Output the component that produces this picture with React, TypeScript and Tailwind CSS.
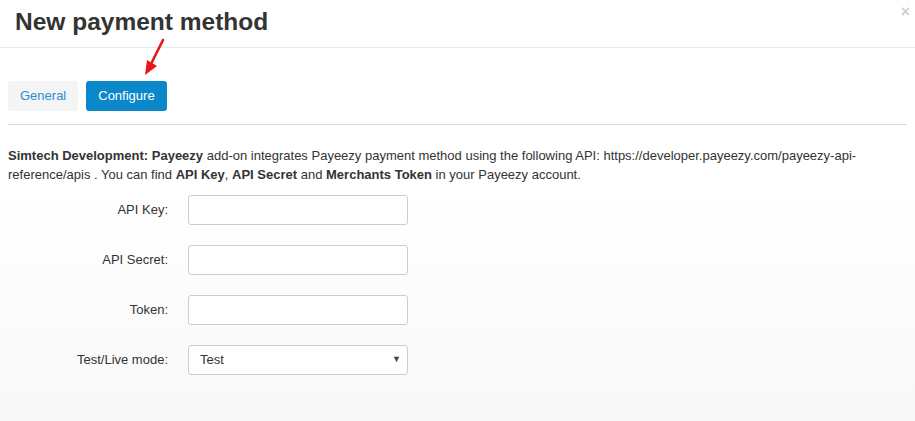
import React from "react";

export default function App() {
  const rows = [
    { label: "API Key:" },
    { label: "API Secret:" },
    { label: "Token:" },
  ];
  return (
    <div
      className="relative w-[915px] h-[421px] overflow-hidden bg-gradient-to-b from-white from-45% to-[#f8f8f8] text-[#333] text-[13px]"
      style={{ fontFamily: '"Liberation Sans", Arial, sans-serif' }}
    >
      <div className="h-[48px] border-b border-[#e8e8e8] pl-[15px] pt-[7px]">
        <h1 className="text-[24.5px] leading-[30px] font-bold text-[#333]">New payment method</h1>
      </div>
      <span className="absolute right-[5px] top-[4px] text-[#d0d0d0] text-[16px] font-bold leading-[16px]">×</span>

      <svg className="absolute left-[140px] top-[38px]" width="30" height="42" viewBox="0 0 30 42">
        <line x1="23" y1="2" x2="10" y2="28" stroke="#e8161b" strokeWidth="2.6" strokeLinecap="round" />
        <polygon points="5,37 7,22 17,28" fill="#e8161b" />
      </svg>

      <div className="mx-[8px] mt-[33px] pb-[13px] border-b border-[#dcdcdc] flex gap-[8px]">
        <button className="h-[30px] px-[12px] rounded-[3px] bg-[#f4f4f4] text-[#2b8dcf] text-[13px]">General</button>
        <button className="h-[30px] px-[12px] rounded-[3px] bg-[#0a88ca] text-white text-[13px]">Configure</button>
      </div>

      <p className="mx-[8px] mt-[21px] leading-[19px] text-[13px] text-[#333]">
        <b>Simtech Development: Payeezy</b> add-on integrates Payeezy payment method using the following API: https://developer.payeezy.com/payeezy-api-reference/apis . You can find <b>API Key</b>, <b>API Secret</b> and <b>Merchants Token</b> in your Payeezy account.
      </p>

      <div className="mt-[11px] flex flex-col gap-[20px]">
        {rows.map((r) => (
          <div key={r.label} className="flex items-center">
            <label className="w-[168px] text-right text-[13px] text-[#333]">{r.label}</label>
            <div className="ml-[20px] w-[220px] h-[30px] rounded-[3px] border border-[#cccccc] bg-white" />
          </div>
        ))}
        <div className="flex items-center">
          <label className="w-[168px] text-right text-[13px] text-[#333]">Test/Live mode:</label>
          <div className="ml-[20px] w-[220px] h-[30px] rounded-[3px] border border-[#cccccc] bg-white flex items-center justify-between pl-[11px] pr-[6px]">
            <span className="text-[13px] text-[#333]">Test</span>
            <span className="text-[9px] text-[#444]">▼</span>
          </div>
        </div>
      </div>
    </div>
  );
}
